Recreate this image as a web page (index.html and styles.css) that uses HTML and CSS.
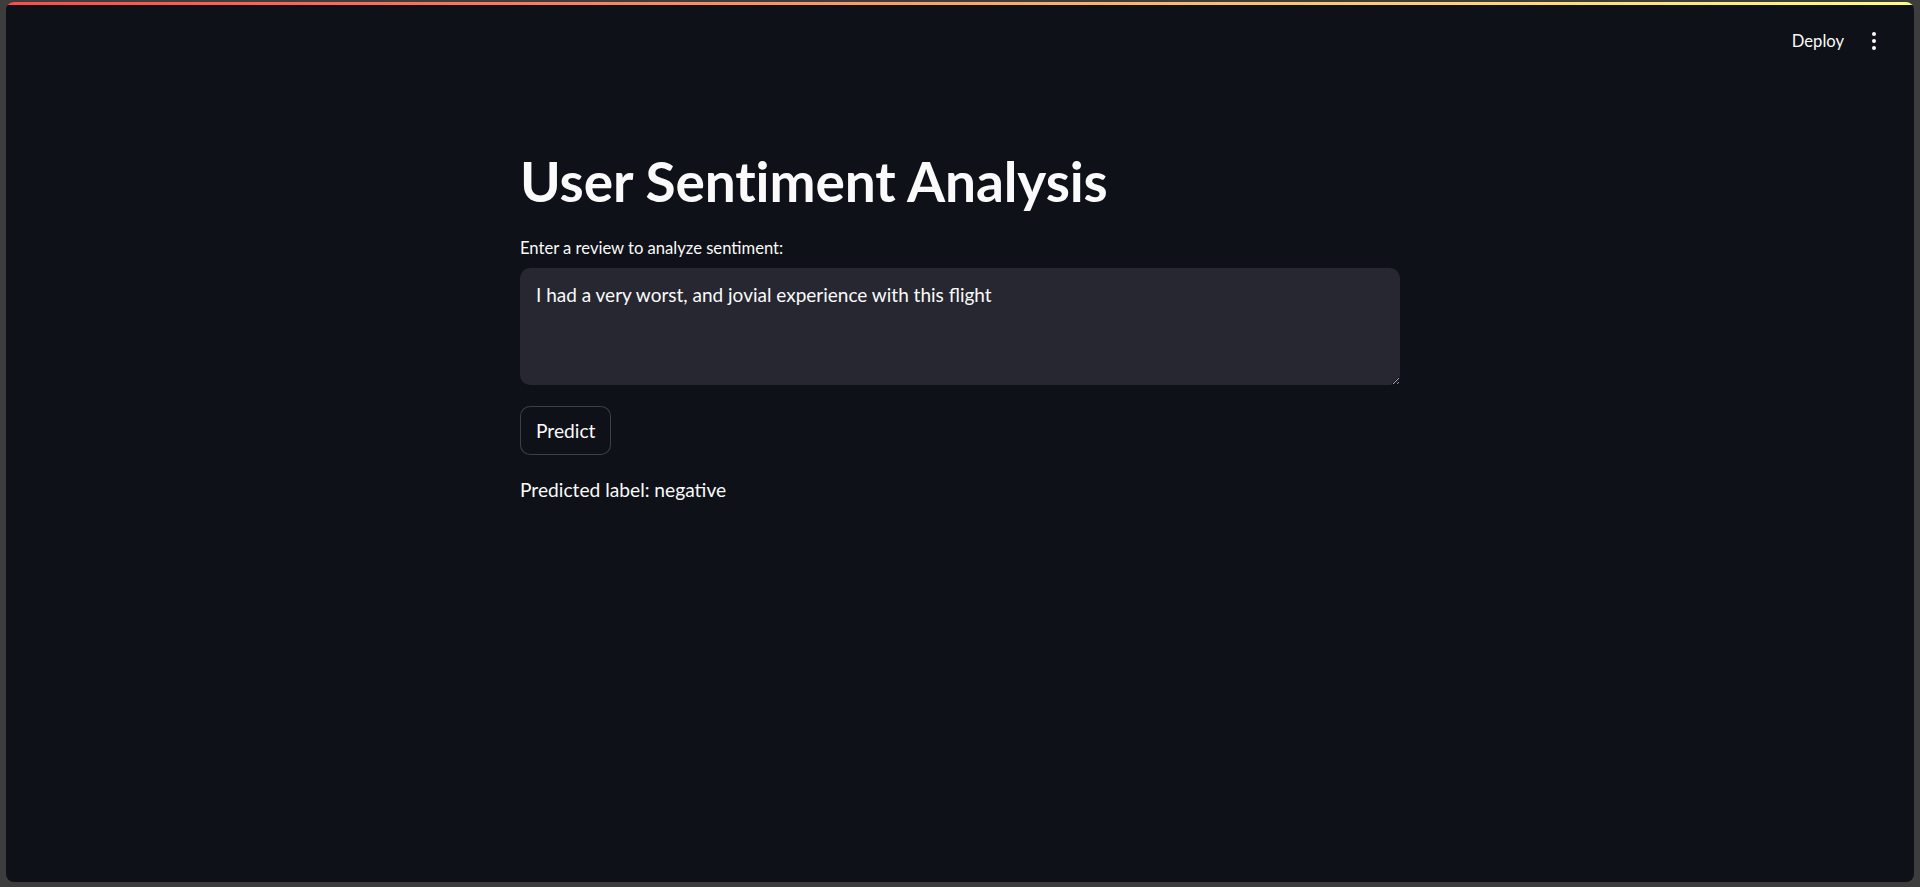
FILE: index.html
```html
<!DOCTYPE html>
<html lang="en">
<head>
<meta charset="utf-8">
<title>User Sentiment Analysis</title>
<link rel="stylesheet" href="styles.css">
</head>
<body>
<div class="app">
  <div class="decoration"></div>
  <header class="header">
    <button class="deploy">Deploy</button>
    <button class="menu" aria-label="Main menu">
      <svg width="6" height="20" viewBox="0 0 6 20"><circle cx="3" cy="3" r="2" fill="#fafafa"/><circle cx="3" cy="10" r="2" fill="#fafafa"/><circle cx="3" cy="17" r="2" fill="#fafafa"/></svg>
    </button>
  </header>
  <main class="main">
    <h1 class="title">User Sentiment Analysis</h1>
    <label class="label" for="review">Enter a review to analyze sentiment:</label>
    <textarea class="review" id="review">I had a very worst, and jovial experience with this flight</textarea>
    <button class="predict">Predict</button>
    <p class="result">Predicted label: negative</p>
  </main>
</div>
</body>
</html>
```
FILE: styles.css
```css
html, body {
  margin: 0;
  height: 100%;
}
body {
  background: #3d3d3d;
  padding: 2px 6px 5px 6px;
  box-sizing: border-box;
  font-family: Lato, "Noto Sans", sans-serif;
  color: #fafafa;
}
.app {
  height: 880px;
  background: #0e1117;
  border-radius: 8px;
  overflow: hidden;
  display: flex;
  flex-direction: column;
}
.decoration {
  height: 3px;
  flex: none;
  background: linear-gradient(90deg, #ff4b4b, #fffd80);
}
.header {
  height: 72px;
  flex: none;
  display: flex;
  align-items: center;
  justify-content: flex-end;
  padding-right: 30px;
  gap: 10px;
}
.deploy {
  background: none;
  border: none;
  color: #fafafa;
  font-family: inherit;
  font-size: 16.6px;
  padding: 6px 10px;
}
.menu {
  background: none;
  border: none;
  padding: 0;
  display: flex;
  width: 20px;
  justify-content: center;
}
.main {
  width: 880px;
  margin: 0 auto;
  display: flex;
  flex-direction: column;
  align-items: flex-start;
}
.title {
  margin: 0;
  padding-top: 71px;
  font-size: 55px;
  font-weight: 700;
  line-height: 66px;
  letter-spacing: -0.1px;
}
.label {
  margin-top: 22px;
  font-size: 16.6px;
  line-height: 25px;
}
.review {
  margin-top: 7px;
  width: 880px;
  height: 117px;
  box-sizing: border-box;
  background: #262730;
  border: none;
  border-radius: 10px;
  color: #fafafa;
  font-family: inherit;
  font-size: 19px;
  line-height: 28px;
  padding: 13px 16px;
  resize: vertical;
  outline: none;
}
.predict {
  margin-top: 21px;
  height: 49px;
  padding: 0 15px;
  background: #0e1117;
  border: 1px solid rgba(250, 250, 250, 0.2);
  border-radius: 10px;
  color: #fafafa;
  font-family: inherit;
  font-size: 19.2px;
}
.result {
  margin: 21px 0 0;
  font-size: 19.2px;
  line-height: 28px;
}
```
